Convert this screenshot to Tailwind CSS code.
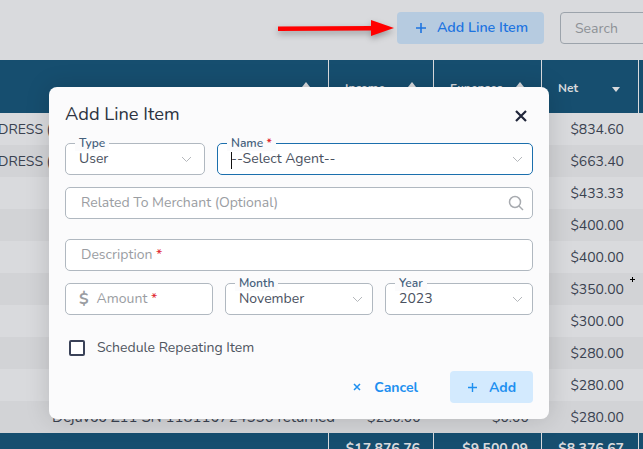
<!DOCTYPE html>
<html>
<head>
<meta charset="utf-8">
<script src="https://cdn.jsdelivr.net/npm/@tailwindcss/browser@4"></script>
</head>
<body class="relative w-[643px] h-[449px] overflow-hidden bg-[#d9dadd] font-['Nunito','Noto_Sans',sans-serif] text-[#3a4250]">
  <!-- toolbar -->
  <div class="h-[60px] flex items-center justify-end pb-[4px] pl-[397px] gap-4">
    <button class="w-[147px] h-[32px] shrink-0 rounded bg-[#b6cbe0] text-[#1d74e0] text-[14.3px] font-semibold flex items-center justify-center gap-[10px] pl-[2px]">
      <svg class="w-3 h-3" viewBox="0 0 12 12" fill="none" stroke="currentColor" stroke-width="1.6"><path d="M6 1v10M1 6h10"/></svg>
      Add Line Item
    </button>
    <div class="w-[100px] h-[32px] shrink-0 -mr-[17px] rounded border border-[#9ca3ab] flex items-center pl-[14px] text-[14px] text-[#8d9196]">Search</div>
  </div>
  <!-- table -->
  <div class="grid grid-cols-[329px_105px_108px_97px_4px] text-[14px]">
    <div class="bg-[#164e6f] h-[53px] relative border-r border-[#d9dadd]"><span class="absolute right-[18px] top-[22px] w-0 h-0 border-x-[4px] border-x-transparent border-b-[5px] border-b-[#d9dadd]"></span></div>
    <div class="bg-[#164e6f] h-[53px] relative border-r border-[#d9dadd] text-[#d9dadd] text-[12px] font-bold pl-[16px] pt-[19px]">Income<span class="absolute right-[17px] top-[22px] w-0 h-0 border-x-[4px] border-x-transparent border-b-[5px] border-b-[#d9dadd]"></span></div>
    <div class="bg-[#164e6f] h-[53px] relative border-r border-[#d9dadd] text-[#d9dadd] text-[12px] font-bold pl-[16px] pt-[19px]">Expenses<span class="absolute right-[17px] top-[22px] w-0 h-0 border-x-[4px] border-x-transparent border-b-[5px] border-b-[#d9dadd]"></span></div>
    <div class="bg-[#164e6f] h-[53px] relative border-r border-[#d9dadd] text-[#d9dadd] text-[12px] font-bold pl-[16px] pt-[19px]">Net<span class="absolute right-[18px] top-[27px] w-0 h-0 border-x-[4px] border-x-transparent border-t-[5px] border-t-[#d9dadd]"></span></div>
    <div class="bg-[#164e6f] h-[53px]"></div>
  </div>
  <div class="flex flex-col text-[14px]">
    <div class="h-[32px] bg-[#d9dadd] flex items-center justify-between pr-[19px]"><span class="-ml-[2px]">DRESS (</span><span>$834.60</span></div>
    <div class="h-[32px] bg-[#d2d3d6] flex items-center justify-between pr-[19px]"><span class="-ml-[2px]">DRESS (</span><span>$663.40</span></div>
    <div class="h-[32px] bg-[#d9dadd] flex items-center justify-end pr-[19px]">$433.33</div>
    <div class="h-[32px] bg-[#d2d3d6] flex items-center justify-end pr-[19px]">$400.00</div>
    <div class="h-[32px] bg-[#d9dadd] flex items-center justify-end pr-[19px]">$400.00</div>
    <div class="h-[32px] bg-[#d2d3d6] flex items-center justify-end pr-[19px]">$350.00</div>
    <div class="h-[32px] bg-[#d9dadd] flex items-center justify-end pr-[19px]">$300.00</div>
    <div class="h-[32px] bg-[#d2d3d6] flex items-center justify-end pr-[19px]">$280.00</div>
    <div class="h-[32px] bg-[#d9dadd] flex items-center justify-end pr-[19px]">$280.00</div>
    <div class="h-[32px] bg-[#d2d3d6] flex items-center pr-[19px] pl-[52px]"><span class="w-[315px] shrink-0 text-[15px]">Dejavoo Z11 SN 118110724556 returned</span><span class="w-[53px] shrink-0">$280.00</span><span class="shrink-0 ml-[72px]">$0.00</span><span class="ml-auto">$280.00</span></div>
  </div>
  <div class="grid grid-cols-[329px_105px_108px_97px_4px] h-[16px] text-[14px] font-bold text-[#d9dadd]">
    <div class="bg-[#164e6f] border-r border-[#d9dadd]"></div>
    <div class="bg-[#164e6f] border-r border-[#d9dadd] text-right pr-[13px] pt-[6px] leading-[20px] whitespace-nowrap">$17,876.76</div>
    <div class="bg-[#164e6f] border-r border-[#d9dadd] text-right pr-[13px] pt-[6px] leading-[20px]">$9,500.09</div>
    <div class="bg-[#164e6f] border-r border-[#d9dadd] text-right pr-[14px] pt-[6px] leading-[20px]">$8,376.67</div>
    <div class="bg-[#164e6f]"></div>
  </div>
  <!-- cursor speck -->
  <svg class="absolute left-[630px] top-[277px]" width="5" height="5" viewBox="0 0 5 5"><path d="M2.5 0v5M0 2.5h5" stroke="#000"/></svg>
  <!-- arrow annotation -->
  <svg class="absolute left-[276px] top-[15px] drop-shadow-[0_3px_3px_rgba(0,0,0,0.3)]" width="120" height="28" viewBox="0 0 120 28"><path d="M2 11.5 L95 11 V5 L118 13 L95 21 V15.5 L2 16 Z" fill="#f00"/></svg>
  <!-- modal -->
  <div class="absolute left-[49px] top-[87px] w-[500px] h-[332px] rounded-[8px] bg-[#fbfbfc] shadow-[0_0_24px_rgba(0,0,0,0.15)] px-[16px] pt-[14px] flex flex-col">
    <div class="flex items-center justify-between h-[28px] pr-[6px]">
      <h2 class="text-[18.3px] text-[#2c3340] font-normal">Add Line Item</h2>
      <svg class="w-[12px] h-[12px] mt-[2px] text-[#20263a]" viewBox="0 0 12 12" fill="none" stroke="currentColor" stroke-width="2.2"><path d="M1 1l10 10M11 1L1 11"/></svg>
    </div>
    <div class="flex gap-[12px] mt-[14px]">
      <div class="relative w-[140px] h-[32px] rounded-[5px] border border-[#b0b8c0] bg-white pl-[13px] text-[14px] leading-[30px] text-[#4a5160]">
        <span class="absolute left-[9px] -top-[8px] px-[4px] bg-[#fbfbfc] text-[12px] leading-[15px] font-semibold text-[#45617c]">Type</span>User
        <svg class="absolute right-[12px] top-[12px] w-[11px] h-[7px] text-[#b5b8bc]" viewBox="0 0 11 7" fill="none" stroke="currentColor"><path d="M1 1l4.5 4.5L10 1"/></svg>
      </div>
      <div class="relative w-[316px] h-[32px] rounded-[5px] border border-[#1b6fad] bg-white pl-[13px] text-[14px] leading-[30px] text-[#4a5160]">
        <span class="absolute left-[9px] -top-[8px] px-[4px] bg-[#fbfbfc] text-[12px] leading-[15px] font-semibold text-[#45617c]">Name <span class="text-[#e0242c]">*</span></span>
        <span class="absolute left-[13px] top-[8px] w-px h-[17px] bg-[#111]"></span>--Select Agent--
        <svg class="absolute right-[9px] top-[12px] w-[11px] h-[7px] text-[#b5b8bc]" viewBox="0 0 11 7" fill="none" stroke="currentColor"><path d="M1 1l4.5 4.5L10 1"/></svg>
      </div>
    </div>
    <div class="relative mt-[12px] h-[32px] w-[468px] rounded-[5px] border border-[#b0b8c0] bg-white pl-[15px] text-[14px] leading-[30px] text-[#9a9da2]">Related To Merchant (Optional)
      <svg class="absolute right-[8px] top-[7px] w-[16px] h-[16px] text-[#a8abb0]" viewBox="0 0 16 16" fill="none" stroke="currentColor" stroke-width="1.5"><circle cx="7" cy="7" r="5.5"/><path d="M11 11l4 4"/></svg>
    </div>
    <div class="mt-[20px] h-[32px] w-[468px] rounded-[5px] border border-[#b0b8c0] bg-white pl-[15px] text-[14px] leading-[30px] text-[#9a9da2]">Description <span class="text-[#e0242c]">*</span></div>
    <div class="flex gap-[12px] mt-[12px]">
      <div class="w-[148px] h-[32px] rounded-[5px] border border-[#b0b8c0] bg-white pl-[13px] text-[14px] leading-[30px] text-[#9a9da2] flex"><span class="font-bold text-[16px] mr-[8px]">$</span><span>Amount <span class="text-[#e0242c]">*</span></span></div>
      <div class="relative w-[148px] h-[32px] rounded-[5px] border border-[#b0b8c0] bg-white pl-[13px] text-[14px] leading-[30px] text-[#4a5160]">
        <span class="absolute left-[9px] -top-[8px] px-[4px] bg-[#fbfbfc] text-[12px] leading-[15px] font-semibold text-[#45617c]">Month</span>November
        <svg class="absolute right-[9px] top-[12px] w-[11px] h-[7px] text-[#b5b8bc]" viewBox="0 0 11 7" fill="none" stroke="currentColor"><path d="M1 1l4.5 4.5L10 1"/></svg>
      </div>
      <div class="relative w-[148px] h-[32px] rounded-[5px] border border-[#b0b8c0] bg-white pl-[13px] text-[14px] leading-[30px] text-[#4a5160]">
        <span class="absolute left-[9px] -top-[8px] px-[4px] bg-[#fbfbfc] text-[12px] leading-[15px] font-semibold text-[#45617c]">Year</span>2023
        <svg class="absolute right-[9px] top-[12px] w-[11px] h-[7px] text-[#b5b8bc]" viewBox="0 0 11 7" fill="none" stroke="currentColor"><path d="M1 1l4.5 4.5L10 1"/></svg>
      </div>
    </div>
    <div class="flex items-center mt-[22px] pl-[4px] gap-[12px]">
      <span class="w-[16px] h-[16px] rounded-[2px] border-2 border-[#3a4258] bg-white"></span>
      <span class="text-[14px] text-[#4f5560]">Schedule Repeating Item</span>
    </div>
    <div class="flex justify-end items-center mt-[13px]">
      <button class="flex items-center text-[14px] font-bold text-[#1e90f0] gap-[13px] mr-[32px]"><svg class="w-[8px] h-[8px]" viewBox="0 0 8 8" fill="none" stroke="currentColor" stroke-width="1.5"><path d="M1 1l6 6M7 1L1 7"/></svg>Cancel</button>
      <button class="w-[83px] h-[32px] rounded-[4px] bg-[#d3eafe] text-[#1e90f0] text-[14px] font-bold flex items-center justify-center gap-[11px]"><svg class="w-[11px] h-[11px]" viewBox="0 0 11 11" fill="none" stroke="currentColor" stroke-width="1.4"><path d="M5.5 1v9M1 5.5h9"/></svg>Add</button>
    </div>
  </div>
</body>
</html>
